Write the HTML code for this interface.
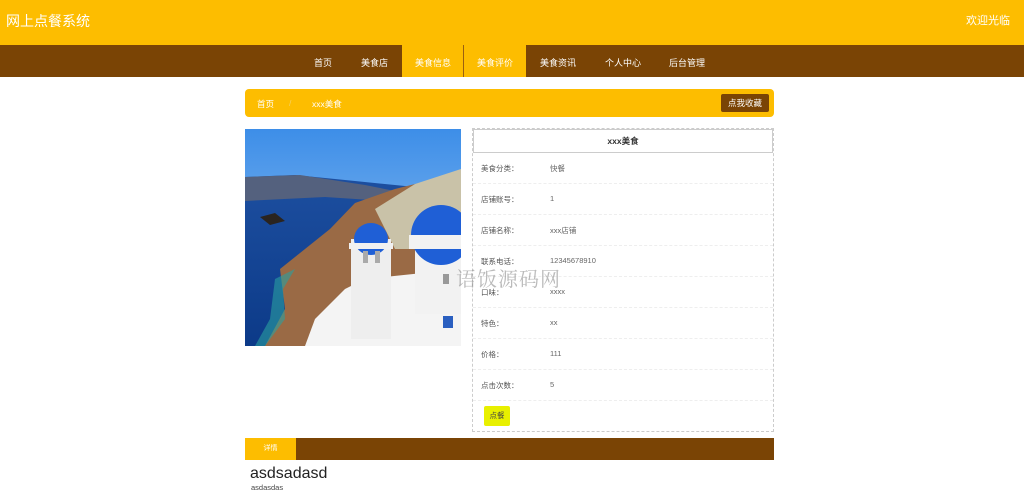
<!DOCTYPE html>
<html><head><meta charset="utf-8"><style>
*{margin:0;padding:0;box-sizing:border-box}
body{width:1024px;height:495px;overflow:hidden;background:#fff;font-family:"Liberation Sans","Noto Sans CJK SC",sans-serif;position:relative;font-size:8px;color:#555}
.hd{position:absolute;left:0;top:0;width:1024px;height:45px;background:#fdbd00}
.hd .t{position:absolute;left:6px;top:11px;font-size:14px;color:#fff}
.hd .w{position:absolute;right:14px;top:12px;font-size:11px;color:#fff}
.nav{position:absolute;left:0;top:45px;width:1024px;height:32px;background:#7a4405}
.nav span{position:absolute;top:11px;font-size:9px;color:#fff}
.act{position:absolute;top:45px;height:32px;background:#fdbd00}
.bc{position:absolute;left:245px;top:89px;width:529px;height:28px;background:#fdbd00;border-radius:4px}
.bc span{position:absolute;top:9px;font-size:8.5px;color:#fff}
.fav{position:absolute;right:5px;top:5px;width:48px;height:18px;background:#7a4405;color:#fff;font-size:8.5px;line-height:18px;text-align:center;border-radius:2px}
.tbl{position:absolute;left:472px;top:128px;width:302px;height:304px;border:1px dashed #ccc}
.tt{position:absolute;left:0;top:0;width:300px;height:24px;border:1px solid #ccc;text-align:center;line-height:22px;font-size:8.5px;font-weight:bold;color:#333}
.row{position:absolute;left:0;width:300px;height:31px;border-bottom:1px dashed #eee}
.row .k{position:absolute;left:8px;top:10px;font-size:7.5px}
.row .v{position:absolute;left:77px;top:10px;font-size:7.5px;color:#666}
.btn{position:absolute;left:11px;top:277px;width:26px;height:20px;background:#e8f000;color:#444;font-size:7.5px;line-height:20px;text-align:center;border-radius:2px}
.tab{position:absolute;left:245px;top:438px;width:529px;height:22px;background:#7a4405}
.tab span{position:absolute;left:0;top:0;width:51px;height:22px;background:#fdbd00;color:#fff;font-size:7px;text-align:center;line-height:22px}
.wm{position:absolute;left:456px;top:263px;font-size:20px;color:rgba(140,140,140,.6);font-family:"Noto Serif CJK SC",serif;letter-spacing:1px}
</style></head><body>
<div class="hd"><div class="t">网上点餐系统</div><div class="w">欢迎光临</div></div>
<div class="nav">
<span style="left:314px">首页</span><span style="left:361px">美食店</span>
<span style="left:540px">美食资讯</span><span style="left:605px">个人中心</span><span style="left:669px">后台管理</span>
</div>
<div class="act" style="left:402px;width:124px"></div>
<div style="position:absolute;left:463px;top:45px;width:1px;height:32px;background:#9a6010"></div>
<div class="nav" style="background:none;left:0;width:1024px"><span style="left:415px">美食信息</span><span style="left:477px">美食评价</span></div>
<div class="bc"><span style="left:12px">首页</span><span style="left:44px;color:#f5d060">/</span><span style="left:67px">xxx美食</span><div class="fav">点我收藏</div></div>
<svg style="position:absolute;left:245px;top:129px" width="216" height="217" viewBox="0 0 216 217">
<defs><linearGradient id="s" x1="0" y1="0" x2="0" y2="1"><stop offset="0" stop-color="#3d8ee8"/><stop offset="1" stop-color="#a8cdf2"/></linearGradient>
<linearGradient id="sea" x1="0" y1="0" x2="0" y2="1"><stop offset="0" stop-color="#1d4fa0"/><stop offset="1" stop-color="#0c3a88"/></linearGradient></defs>
<rect width="216" height="217" fill="url(#s)"/>
<path d="M0 48 L50 46 L110 52 L170 58 L216 60 L216 217 L0 217Z" fill="url(#sea)"/>
<path d="M0 48 L55 46 L120 56 L150 62 L140 72 L80 68 L0 72Z" fill="#54617e"/>
<path d="M110 74 L150 60 L190 50 L216 45 L216 217 L20 217 L40 180 L35 140 L60 120 L85 100Z" fill="#9a6a45"/>
<path d="M20 217 L40 190 L38 160 L50 140 L30 150 L25 190 L10 217Z" fill="#2aa0a0" opacity=".6"/>
<path d="M130 80 L170 55 L216 40 L216 120 L150 120Z" fill="#c9c2a8"/>
<path d="M100 160 L120 150 L216 140 L216 217 L60 217 L70 190Z" fill="#f4f4f4"/>
<rect x="170" y="105" width="46" height="80" fill="#f2f2f2"/>
<ellipse cx="196" cy="106" rx="30" ry="30" fill="#1f5fd6"/>
<rect x="164" y="106" width="52" height="14" fill="#f2f2f2"/>
<rect x="106" y="110" width="40" height="100" fill="#eeeeee"/>
<ellipse cx="126" cy="110" rx="17" ry="16" fill="#1f5fd6"/>
<rect x="104" y="114" width="44" height="6" fill="#f0f0f0"/>
<rect x="118" y="122" width="5" height="12" fill="#aaa"/><rect x="130" y="122" width="5" height="12" fill="#aaa"/>
<rect x="198" y="145" width="6" height="10" fill="#999"/>
<rect x="198" y="187" width="10" height="12" fill="#2a5fc0"/>
<path d="M15 88 L30 84 L40 92 L25 96Z" fill="#2a2420"/>
</svg>
<div class="tbl">
<div class="tt">xxx美食</div>
<div class="row" style="top:24px"><span class="k">美食分类：</span><span class="v">快餐</span></div>
<div class="row" style="top:55px"><span class="k">店铺账号：</span><span class="v">1</span></div>
<div class="row" style="top:86px"><span class="k">店铺名称：</span><span class="v">xxx店铺</span></div>
<div class="row" style="top:117px"><span class="k">联系电话：</span><span class="v">12345678910</span></div>
<div class="row" style="top:148px"><span class="k">口味：</span><span class="v">xxxx</span></div>
<div class="row" style="top:179px"><span class="k">特色：</span><span class="v">xx</span></div>
<div class="row" style="top:210px"><span class="k">价格：</span><span class="v">111</span></div>
<div class="row" style="top:241px"><span class="k">点击次数：</span><span class="v">5</span></div>
<div class="btn">点餐</div>
</div>
<div class="wm">语饭源码网</div>
<div class="tab"><span>详情</span></div>
<div style="position:absolute;left:250px;top:465px;font-size:16px;color:#222">asdsadasd</div>
<div style="position:absolute;left:251px;top:483px;font-size:7.5px;color:#444">asdasdas</div>
</body></html>
